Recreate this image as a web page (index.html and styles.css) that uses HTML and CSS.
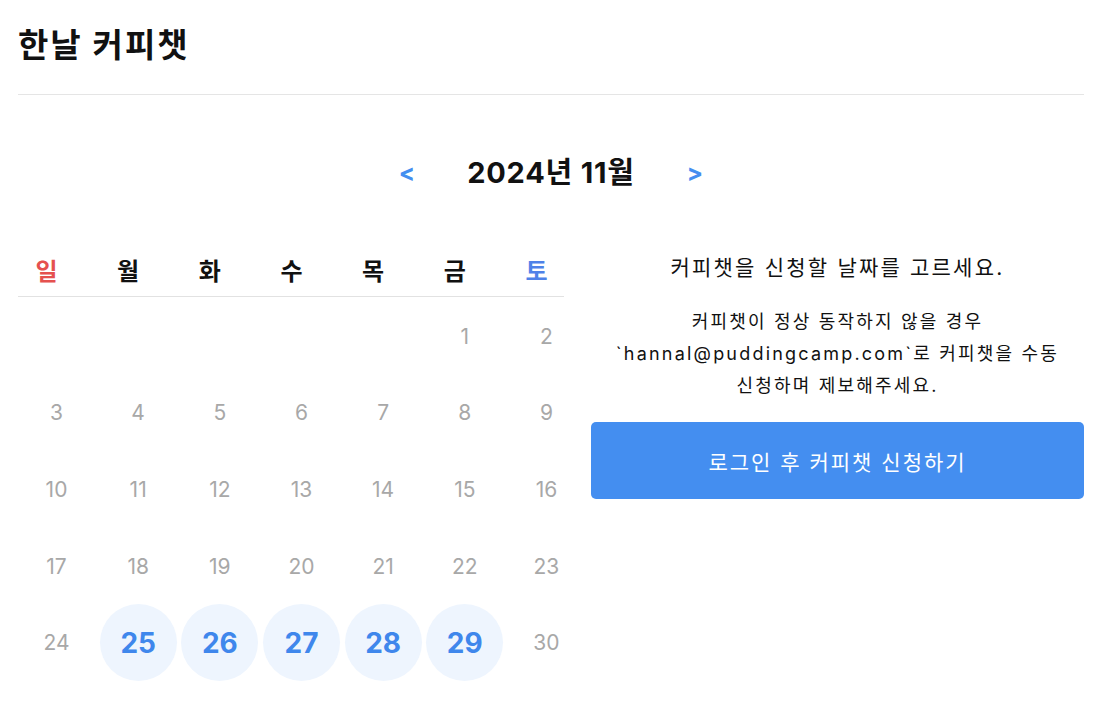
FILE: index.html
```html
<!DOCTYPE html>
<html lang="ko">
<head>
<meta charset="utf-8">
<title>한날 커피챗</title>
<link rel="stylesheet" href="styles.css">
</head>
<body>
<div class="page">
  <h1 class="title">한날 커피챗</h1>
  <hr class="divider">
  <div class="month-nav">
    <button class="nav-btn">&lt;</button>
    <h2 class="month">2024년 11월</h2>
    <button class="nav-btn">&gt;</button>
  </div>
  <div class="main">
    <div class="calendar">
      <div class="weekdays">
        <div class="wd sun">일</div>
        <div class="wd">월</div>
        <div class="wd">화</div>
        <div class="wd">수</div>
        <div class="wd">목</div>
        <div class="wd">금</div>
        <div class="wd sat">토</div>
      </div>
      <div class="days">
        <div class="day"></div><div class="day"></div><div class="day"></div><div class="day"></div><div class="day"></div>
        <div class="day">1</div><div class="day">2</div>
        <div class="day">3</div><div class="day">4</div><div class="day">5</div><div class="day">6</div><div class="day">7</div><div class="day">8</div><div class="day">9</div>
        <div class="day">10</div><div class="day">11</div><div class="day">12</div><div class="day">13</div><div class="day">14</div><div class="day">15</div><div class="day">16</div>
        <div class="day">17</div><div class="day">18</div><div class="day">19</div><div class="day">20</div><div class="day">21</div><div class="day">22</div><div class="day">23</div>
        <div class="day">24</div>
        <div class="day active"><span>25</span></div>
        <div class="day active"><span>26</span></div>
        <div class="day active"><span>27</span></div>
        <div class="day active"><span>28</span></div>
        <div class="day active"><span>29</span></div>
        <div class="day">30</div>
      </div>
    </div>
    <div class="panel">
      <p class="lead">커피챗을 신청할 날짜를 고르세요.</p>
      <p class="note">커피챗이 정상 동작하지 않을 경우<br>`hannal@puddingcamp.com`로 커피챗을 수동<br>신청하며 제보해주세요.</p>
      <button class="apply">로그인 후 커피챗 신청하기</button>
    </div>
  </div>
</div>
</body>
</html>
```

FILE: styles.css
```css
* { box-sizing: border-box; }
body {
  margin: 0;
  background: #fff;
  color: #111;
  font-family: Inter, "Noto Sans CJK KR", sans-serif;
}
.page { padding: 0 18px; }
.title {
  margin: 0;
  padding-top: 23px;
  font-size: 33px;
  line-height: 44px;
  font-weight: 700;
  letter-spacing: 2px;
}
.divider {
  margin: 27px 0 0;
  border: 0;
  border-top: 1px solid #e5e5e5;
}
.month-nav {
  margin-top: 58px;
  height: 40px;
  display: flex;
  justify-content: center;
  align-items: center;
  gap: 39px;
}
.nav-btn {
  width: 40px;
  padding: 0;
  border: 0;
  background: none;
  color: #448ef0;
  font-family: inherit;
  font-size: 24px;
  font-weight: 700;
  line-height: 40px;
}
.month {
  margin: 0;
  width: 170px;
  text-align: center;
  font-size: 29px;
  font-weight: 700;
  line-height: 40px;
  letter-spacing: 0.8px;
  white-space: nowrap;
}
.main {
  margin-top: 54px;
  display: flex;
  gap: 6px;
  align-items: flex-start;
}
.calendar { width: 567px; flex: none; }
.weekdays {
  width: 546px;
  display: grid;
  grid-template-columns: repeat(7, 77px);
  column-gap: 4.67px;
  border-bottom: 1px solid #e2e2e2;
}
.wd {
  padding-right: 20px;
  text-align: center;
  font-size: 24px;
  font-weight: 700;
  line-height: 49px;
  white-space: nowrap;
}
.wd.sun { color: #e5514f; }
.wd.sat { color: #4f82e8; }
.days {
  margin-top: 1px;
  display: grid;
  grid-template-columns: repeat(7, 77px);
  grid-auto-rows: 76.6px;
  column-gap: 4.67px;
}
.day {
  display: flex;
  align-items: center;
  justify-content: center;
  color: #a8a8a8;
  font-size: 21px;
}
.day.active span {
  width: 77px;
  height: 77px;
  border-radius: 50%;
  background: #eef5fe;
  color: #3f87ec;
  font-size: 28px;
  font-weight: 700;
  display: flex;
  align-items: center;
  justify-content: center;
}
.panel {
  flex: 1;
  text-align: center;
}
.lead {
  margin: 0;
  font-size: 21px;
  line-height: 42px;
  letter-spacing: 2.2px;
}
.note {
  margin: 17px 0 0;
  font-size: 18px;
  line-height: 32px;
  letter-spacing: 2.2px;
}
.apply {
  margin-top: 20px;
  width: 100%;
  height: 77px;
  border: 0;
  border-radius: 5px;
  background: #448ef0;
  color: #fff;
  font-family: inherit;
  font-size: 21px;
  letter-spacing: 2px;
}
```
